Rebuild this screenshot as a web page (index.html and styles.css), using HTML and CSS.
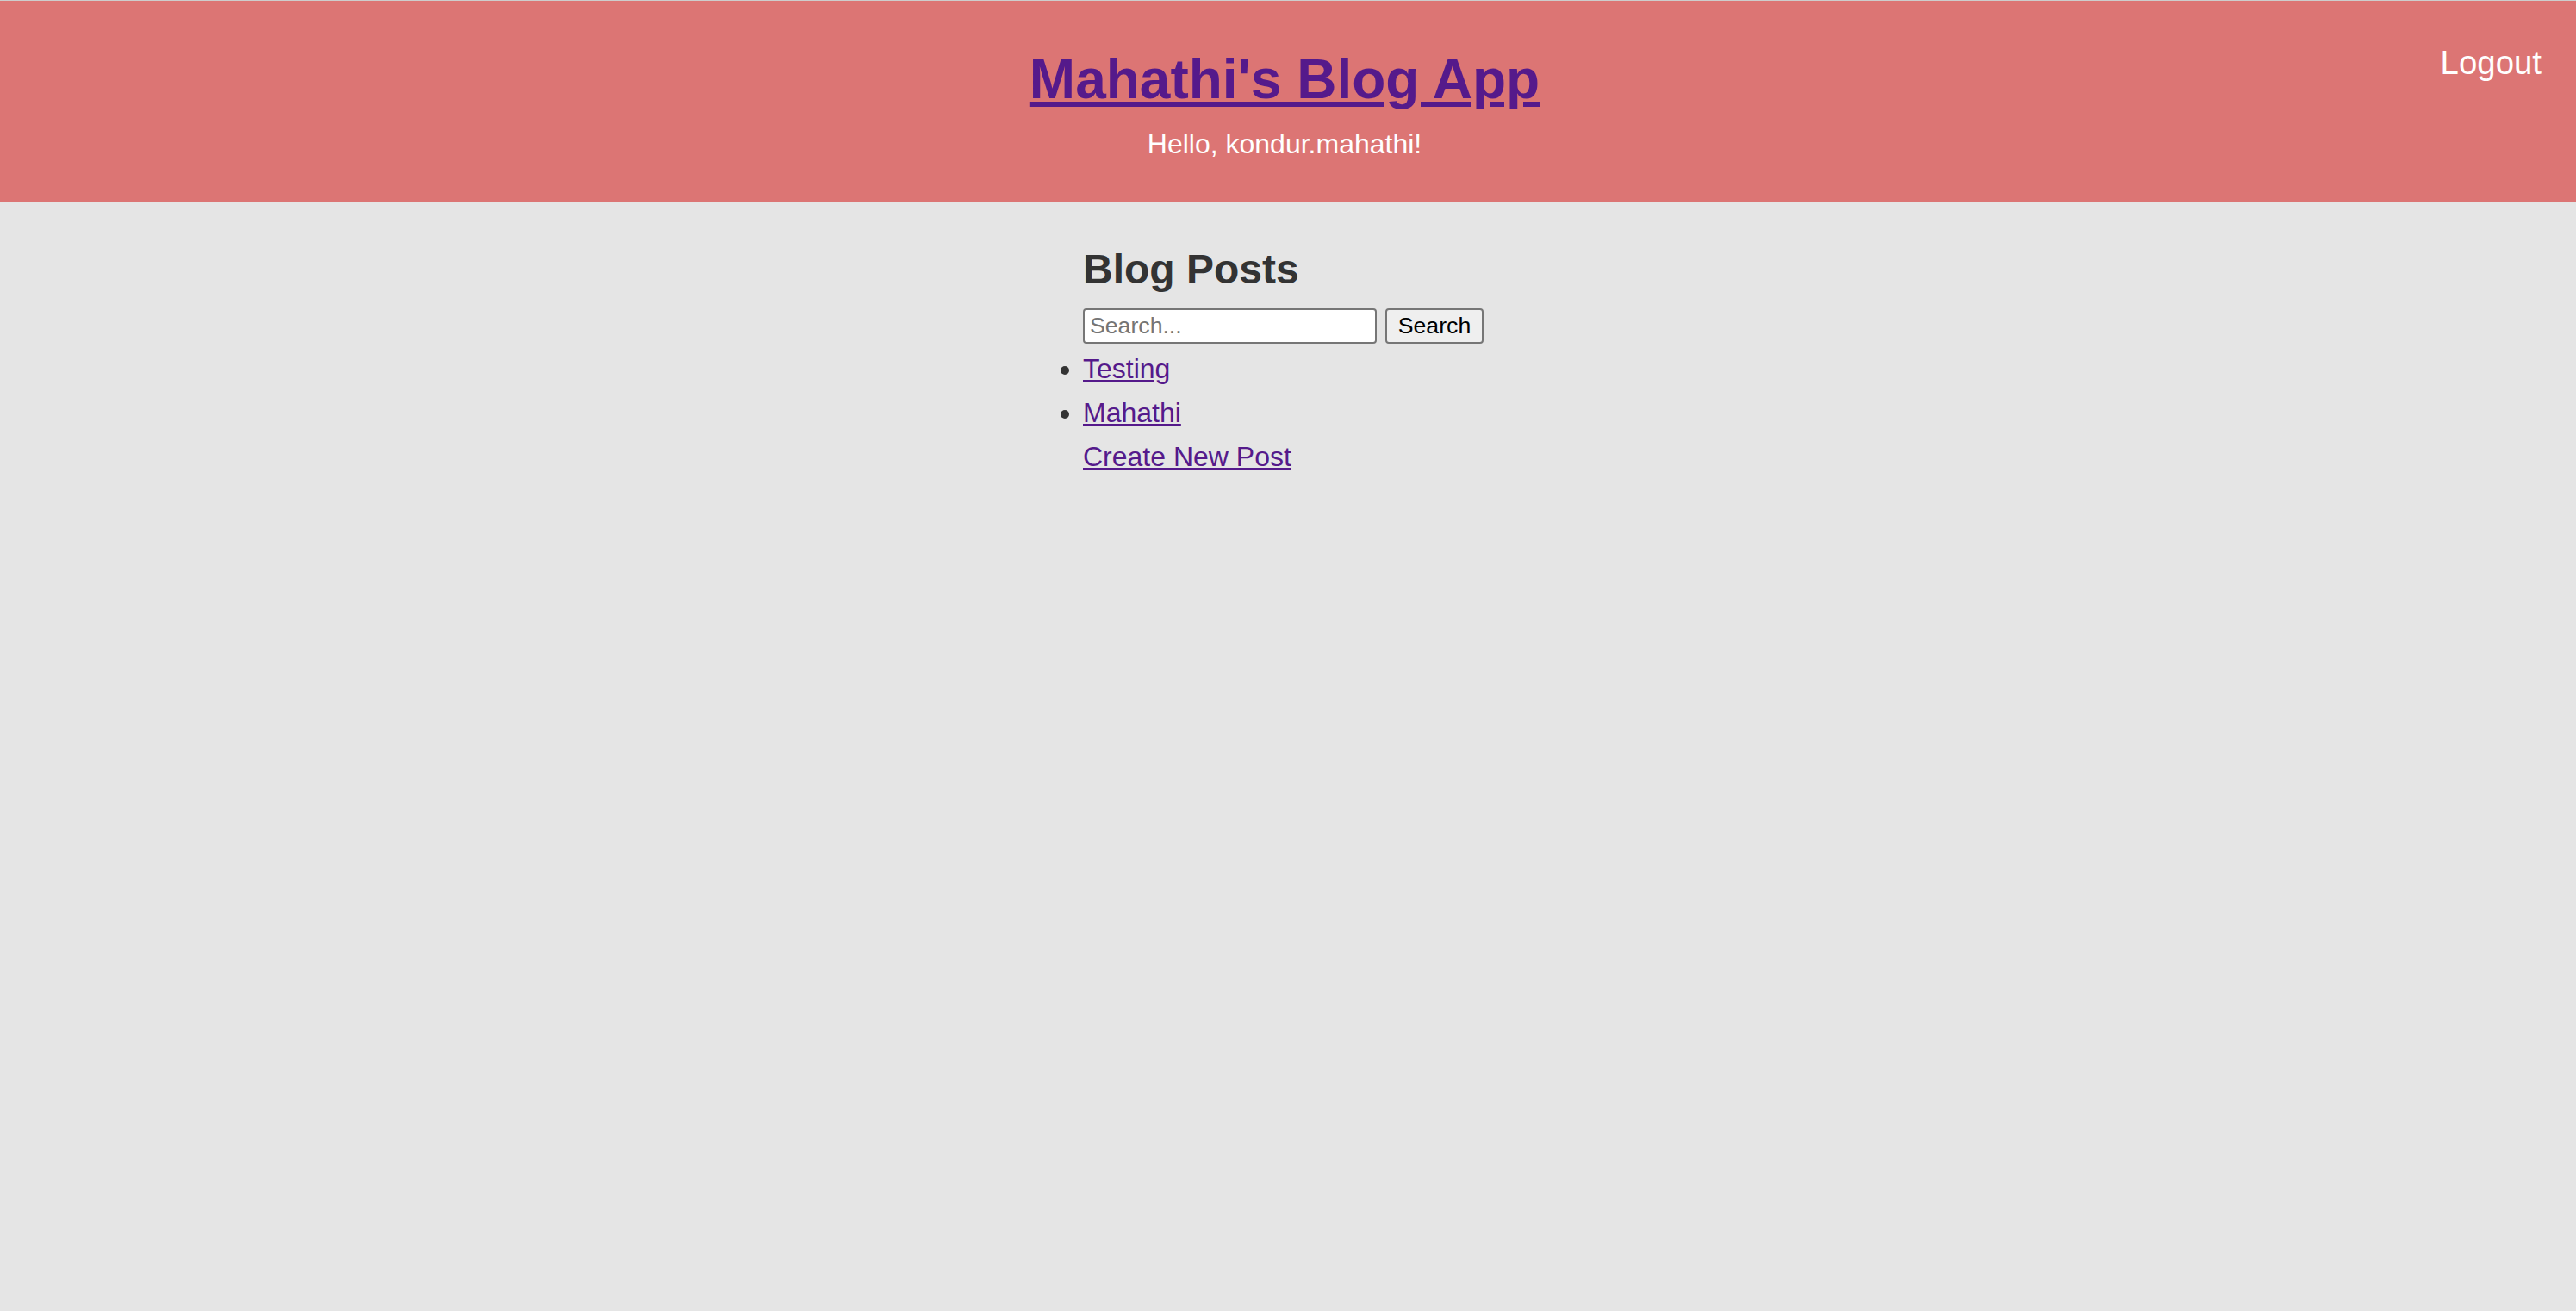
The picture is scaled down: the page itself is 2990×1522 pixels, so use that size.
FILE: index.html
```html
<!DOCTYPE html>
<html lang="en">
<head>
<meta charset="utf-8">
<title>Mahathi's Blog App</title>
<link rel="stylesheet" href="styles.css">
</head>
<body>
<header class="site-header">
  <h1 class="site-title"><a href="#">Mahathi's Blog App</a></h1>
  <p class="greeting">Hello, kondur.mahathi!</p>
  <button class="logout" type="button">Logout</button>
</header>
<main class="content">
  <h2 class="section-title">Blog Posts</h2>
  <form class="search-form"><input class="search-input" type="text" placeholder="Search..."><button class="search-button" type="button">Search</button></form>
  <ul class="post-list">
    <li><a href="#">Testing</a></li>
    <li><a href="#">Mahathi</a></li>
  </ul>
  <div class="create"><a href="#">Create New Post</a></div>
</main>
</body>
</html>
```
FILE: styles.css
```css
html, body {
  margin: 0;
  padding: 0;
}
body {
  background: #e5e5e5;
  font-family: "Liberation Sans", Arial, sans-serif;
  font-size: 32px;
  color: #333333;
  min-height: 100vh;
}
a {
  color: #551a8b;
}
.site-header {
  position: relative;
  background: #dc7574;
  border-top: 1px solid #cdcdcd;
  text-align: center;
  padding: 54px 8px 49px 0;
}
.site-title {
  margin: 0;
  font-size: 64px;
  font-weight: bold;
  line-height: normal;
}
.greeting {
  margin: 20px 0 0;
  color: #ffffff;
  font-size: 32px;
  line-height: normal;
}
.logout {
  position: absolute;
  top: 50px;
  right: 40px;
  background: none;
  border: none;
  padding: 0;
  margin: 0;
  color: #ffffff;
  font-family: "Liberation Sans", Arial, sans-serif;
  font-size: 38.4px;
  line-height: normal;
  cursor: pointer;
}
.content {
  width: 476px;
  margin: 0 auto;
  padding-top: 50px;
}
.section-title {
  margin: 0 0 18px;
  font-size: 48px;
  font-weight: bold;
  line-height: normal;
  color: #333333;
}
.search-form {
  display: flex;
  align-items: center;
  gap: 10px;
  margin: 0 0 4px;
}
.search-input {
  width: 341px;
  height: 41px;
  box-sizing: border-box;
  border: 2px solid #767676;
  border-radius: 4px;
  background: #ffffff;
  padding: 0 6px;
  font-family: "Liberation Sans", Arial, sans-serif;
  font-size: 26.67px;
  color: #000000;
}
.search-input::placeholder {
  color: #757575;
}
.search-button {
  width: 114px;
  height: 41px;
  box-sizing: border-box;
  border: 2px solid #767676;
  border-radius: 4px;
  background: #efefef;
  padding: 0 12px;
  font-family: "Liberation Sans", Arial, sans-serif;
  font-size: 26.67px;
  color: #000000;
}
.post-list {
  margin: 0;
  padding: 0;
  list-style: disc outside;
}
.post-list li {
  line-height: 51px;
}
.create {
  line-height: 51px;
}
```
